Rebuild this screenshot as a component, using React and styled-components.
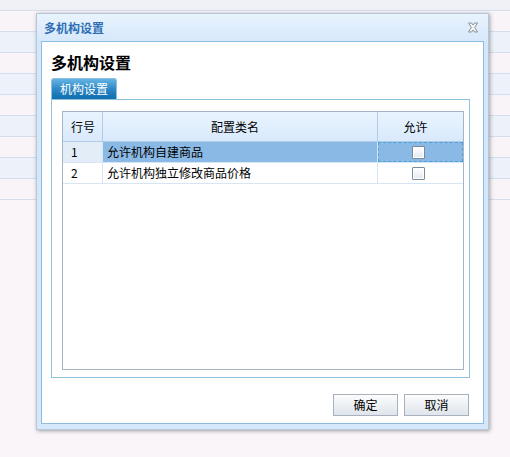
import React from "react";
import styled, { createGlobalStyle } from "styled-components";

const Global = createGlobalStyle`
  html, body { margin: 0; padding: 0; }
  body {
    width: 510px; height: 457px; overflow: hidden;
    background: #f9f5f8;
    font-family: "Noto Sans CJK SC", "Noto Sans", sans-serif;
    font-size: 12px; color: #000;
  }
`;

const Page = styled.div`
  position: relative;
  width: 510px;
  height: 457px;
`;

const BgHeader = styled.div`
  height: 10px;
  background: #eef0f6;
  border-bottom: 1px solid #d3deee;
`;

const BgRow = styled.div`
  height: 20px;
  background: ${(p) => (p.$alt ? "#edf1f9" : "#f9f4f8")};
  border-bottom: 1px solid #d3deee;
`;

const Window = styled.div`
  position: absolute;
  left: 36px;
  top: 13px;
  width: 451px;
  height: 415px;
  border: 1px solid #b4c6d8;
  background: #d5e7fb;
  box-shadow: 1px 1px 4px rgba(0, 0, 0, 0.35);
  display: flex;
  flex-direction: column;
`;

const TitleBar = styled.div`
  height: 28px;
  display: flex;
  align-items: center;
  justify-content: space-between;
  padding: 0 9px 0 7px;
  background: linear-gradient(#e9f3fd, #d6e8fb);
`;

const Title = styled.span`
  color: #2e6db3;
  font-size: 12px;
  font-weight: bold;
  line-height: 14px;
`;

const Content = styled.div`
  flex: 1;
  margin: 0 4px 5px 4px;
  border: 1px solid #8dbce0;
  background: #fff;
  padding: 10px 14px 7px 9px;
  display: flex;
  flex-direction: column;
`;

const Heading = styled.div`
  font-size: 16px;
  font-weight: bold;
  line-height: 20px;
  height: 20px;
  margin-bottom: 6px;
`;

const TabStrip = styled.div`
  display: flex;
  height: 21px;
`;

const Tab = styled.div`
  width: 66px;
  height: 21px;
  box-sizing: border-box;
  border: 1px solid #8fc0dc;
  border-bottom: none;
  border-radius: 3px 3px 0 0;
  background: linear-gradient(#64b4e4, #2a85c4 55%, #0e6eae);
  color: #fff;
  line-height: 20px;
  text-align: center;
  font-size: 12px;
`;

const Panel = styled.div`
  width: 419px;
  height: 279px;
  box-sizing: border-box;
  border: 1px solid #8fc0dc;
  padding: 11px 5px 7px 10px;
`;

const Grid = styled.div`
  width: 402px;
  height: 259px;
  box-sizing: border-box;
  border: 1px solid #a3b5c7;
  display: flex;
  flex-direction: column;
`;

const Row = styled.div`
  display: grid;
  grid-template-columns: 40px 275px 1fr;
  height: ${(p) => (p.$header ? "29px" : "20px")};
  border-bottom: 1px solid ${(p) => (p.$header ? "#b0cce6" : "#d6e6f4")};
  background: ${(p) => (p.$header ? "linear-gradient(#eaf4fe, #d8e9fc)" : "#fff")};
`;

const Cell = styled.div`
  display: flex;
  align-items: center;
  justify-content: ${(p) => (p.$center ? "center" : "flex-start")};
  padding-left: ${(p) => (p.$center ? "0" : p.$pad || "4px")};
  padding-right: ${(p) => (p.$center ? (p.$header ? "10px" : "4px") : "0")};
  border-right: ${(p) => (p.$last ? "none" : `1px solid ${p.$header ? "#b0cce6" : "#d6e6f4"}`)};
  background: ${(p) => p.$bg || "transparent"};
  font-size: 12px;
  line-height: 14px;
  box-sizing: border-box;
  ${(p) => (p.$focus ? "outline: 1px dashed #4aa0d6; outline-offset: -1px;" : "")}
`;

const Check = styled.span`
  width: 13px;
  height: 13px;
  box-sizing: border-box;
  border: 1px solid #7d8a99;
  border-radius: 1px;
  background: linear-gradient(#ffffff, #e3e9f2);
  box-shadow: inset 0 0 0 1px #fff;
`;

const Footer = styled.div`
  display: flex;
  justify-content: flex-end;
  gap: 6px;
  margin-top: 16px;
`;

const Button = styled.button`
  width: 65px;
  height: 22px;
  box-sizing: border-box;
  border: 1px solid #a9b1bf;
  background: linear-gradient(#fbfcfd, #dfe5ec);
  font-family: "Noto Sans CJK SC", sans-serif;
  font-size: 12px;
  line-height: 14px;
  color: #000;
  padding: 0;
`;

const CloseIcon = () => (
  <svg width="12" height="11" viewBox="0 0 12 11">
    <path
      d="M1.5 1 L4.5 1 L6 3 L7.5 1 L10.5 1 L7.7 5.5 L10.5 10 L7.5 10 L6 8 L4.5 10 L1.5 10 L4.3 5.5 Z"
      fill="#f4f6f8"
      stroke="#8a9198"
      strokeWidth="1"
    />
  </svg>
);

const rows = [
  { no: "1", name: "允许机构自建商品", sel: true },
  { no: "2", name: "允许机构独立修改商品价格", sel: false },
];

export default function App() {
  return (
    <>
      <Global />
      <Page>
        <BgHeader />
        {Array.from({ length: 9 }).map((_, i) => (
          <BgRow key={i} $alt={i % 2 === 1} />
        ))}
        <Window>
          <TitleBar>
            <Title>多机构设置</Title>
            <CloseIcon />
          </TitleBar>
          <Content>
            <Heading>多机构设置</Heading>
            <TabStrip>
              <Tab>机构设置</Tab>
            </TabStrip>
            <Panel>
              <Grid>
                <Row $header>
                  <Cell $header $pad="8px">行号</Cell>
                  <Cell $header $center>配置类名</Cell>
                  <Cell $header $center $last>允许</Cell>
                </Row>
                {rows.map((r) => (
                  <Row key={r.no}>
                    <Cell $pad="8px" $bg={r.sel ? "#e3edf7" : undefined}>{r.no}</Cell>
                    <Cell $bg={r.sel ? "#8bb9e6" : undefined}>{r.name}</Cell>
                    <Cell $center $last $bg={r.sel ? "#8bb9e6" : undefined} $focus={r.sel}>
                      <Check />
                    </Cell>
                  </Row>
                ))}
              </Grid>
            </Panel>
            <Footer>
              <Button>确定</Button>
              <Button>取消</Button>
            </Footer>
          </Content>
        </Window>
      </Page>
    </>
  );
}
